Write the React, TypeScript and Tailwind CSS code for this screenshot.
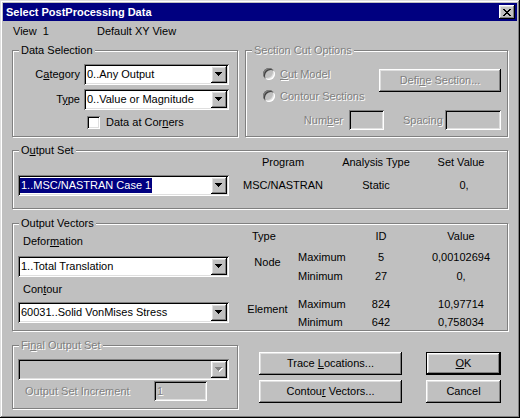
import React from "react";

const raised =
  "shadow-[inset_-1px_-1px_#000,inset_1px_1px_#fff,inset_-2px_-2px_#808080,inset_2px_2px_#dfdfdf]";
const sunken =
  "shadow-[inset_1px_1px_#808080,inset_-1px_-1px_#fff,inset_2px_2px_#000,inset_-2px_-2px_#dfdfdf]";
const dim = "text-[#808080] [text-shadow:1px_1px_0_#fff]";

const Arrow = ({ disabled }: { disabled?: boolean }) => (
  <svg width="8" height="5" viewBox="0 0 8 5" shapeRendering="crispEdges">
    {disabled && (
      <path d="M1 1h7v1H1zM2 2h5v1H2zM3 3h3v1H3zM4 4h1v1H4z" fill="#fff" />
    )}
    <path
      d="M0 0h7v1H0zM1 1h5v1H1zM2 2h3v1H2zM3 3h1v1H3z"
      fill={disabled ? "#808080" : "#000"}
    />
  </svg>
);

function Combo({
  className,
  children,
  disabled,
}: {
  className?: string;
  children?: React.ReactNode;
  disabled?: boolean;
}) {
  return (
    <div
      className={`flex h-[21px] p-[2px] ${sunken} ${
        disabled ? "bg-[#c0c0c0]" : "bg-white"
      } ${className ?? ""}`}
    >
      <div className="flex flex-1 items-center overflow-hidden whitespace-nowrap">
        {children}
      </div>
      <div
        className={`flex w-[16px] items-center justify-center bg-[#c0c0c0] ${raised}`}
      >
        <Arrow disabled={disabled} />
      </div>
    </div>
  );
}

function Button({
  className,
  children,
  disabled,
  isDefault,
}: {
  className?: string;
  children: React.ReactNode;
  disabled?: boolean;
  isDefault?: boolean;
}) {
  return (
    <div
      className={`flex h-[23px] items-center justify-center whitespace-nowrap bg-[#c0c0c0] ${raised} ${
        isDefault ? "border border-black" : ""
      } ${disabled ? dim : ""} ${className ?? ""}`}
    >
      <span>{children}</span>
    </div>
  );
}

const Radio = () => (
  <div className="h-[12px] w-[12px] shrink-0 rounded-full bg-[#c0c0c0] shadow-[inset_1px_1px_#808080,inset_-1px_-1px_#fff,inset_2px_2px_#404040,inset_-2px_-2px_#dfdfdf]" />
);

function Group({
  label,
  disabled,
  className,
  children,
}: {
  label: React.ReactNode;
  disabled?: boolean;
  className?: string;
  children?: React.ReactNode;
}) {
  return (
    <div
      className={`relative shrink-0 border border-[#808080] shadow-[1px_1px_0_#fff,inset_1px_1px_0_#fff] ${
        className ?? ""
      }`}
    >
      <span
        className={`absolute left-[6px] top-[-7px] whitespace-nowrap bg-[#c0c0c0] px-[2px] leading-[13px] ${
          disabled ? dim : ""
        }`}
      >
        {label}
      </span>
      {children}
    </div>
  );
}

function DataRow({
  label,
  id,
  value,
  className,
}: {
  label: string;
  id: string;
  value: string;
  className?: string;
}) {
  return (
    <div className={`flex h-[13px] ${className ?? ""}`}>
      <div className="w-[43px] whitespace-nowrap">{label}</div>
      <div className="w-[80px] text-center">{id}</div>
      <div className="w-[80px] text-center">{value}</div>
    </div>
  );
}

export default function App() {
  return (
    <div className="h-[418px] w-[520px] overflow-hidden bg-[#c0c0c0] p-[3px] font-['Liberation_Sans',Arial,sans-serif] text-[11px] leading-[13px] text-black shadow-[inset_-1px_-1px_#000,inset_1px_1px_#dfdfdf,inset_-2px_-2px_#808080,inset_2px_2px_#fff]">
      {/* title bar */}
      <div className="flex h-[18px] items-center justify-between bg-[#000080] pl-[3px] pr-[2px]">
        <span className="font-bold text-white">Select PostProcessing Data</span>
        <div
          className={`flex h-[14px] w-[16px] items-center justify-center bg-[#c0c0c0] ${raised}`}
        >
          <svg width="8" height="7" viewBox="0 0 8 7" shapeRendering="crispEdges">
            <path
              d="M0 0h2v1H0zM6 0h2v1H6zM1 1h2v1H1zM5 1h2v1H5zM2 2h4v1H2zM3 3h2v1H3zM2 4h4v1H2zM1 5h2v1H1zM5 5h2v1H5zM0 6h2v1H0zM6 6h2v1H6z"
              fill="#000"
            />
          </svg>
        </div>
      </div>

      <div className="pl-[9px]">
        <div className="mt-[4px] flex h-[13px] items-center">
          <span className="ml-[1px] w-[84px]">
            View<span className="ml-[6px]">1</span>
          </span>
          <span>Default XY View</span>
        </div>

        {/* top row */}
        <div className="mt-[12px] flex gap-[7px]">
          <Group label="Data Selection" className="h-[87px] w-[226px]">
            <div className="mt-[13px] flex items-center">
              <span className="w-[67px] text-right">
                C<u>a</u>tegory
              </span>
              <Combo className="ml-[4px] w-[145px]">
                <span className="pl-[1px]">0..Any Output</span>
              </Combo>
            </div>
            <div className="mt-[4px] flex items-center">
              <span className="w-[67px] text-right">
                T<u>y</u>pe
              </span>
              <Combo className="ml-[4px] w-[145px]">
                <span className="pl-[1px]">0..Value or Magnitude</span>
              </Combo>
            </div>
            <div className="mt-[6px] flex items-center">
              <div className={`ml-[74px] h-[13px] w-[13px] bg-white ${sunken}`} />
              <span className="ml-[6px]">
                Data at Cor<u>n</u>ers
              </span>
            </div>
          </Group>

          <Group label="Section Cut Options" disabled className="h-[87px] w-[263px]">
            <div className="flex">
              <div className="ml-[17px] mt-[17px] w-[116px]">
                <div className="flex h-[12px] items-center gap-[5px]">
                  <Radio />
                  <span className={dim}>
                    <u>C</u>ut Model
                  </span>
                </div>
                <div className="mt-[10px] flex h-[12px] items-center gap-[5px]">
                  <Radio />
                  <span className={`whitespace-nowrap ${dim}`}>Contour Sections</span>
                </div>
              </div>
              <Button disabled className="mt-[18px] w-[122px]">
                Defi<u>n</u>e Section...
              </Button>
            </div>
            <div className="mt-[8px] flex items-center">
              <span className={`w-[97px] text-right ${dim}`}>
                Num<u>b</u>er
              </span>
              <div className={`ml-[6px] h-[20px] w-[35px] bg-[#c0c0c0] ${sunken}`} />
              <span className={`ml-[19px] w-[37px] text-right ${dim}`}>Spacing</span>
              <div className={`ml-[5px] h-[20px] w-[56px] bg-[#c0c0c0] ${sunken}`} />
            </div>
          </Group>
        </div>

        {/* output set */}
        <Group
          label={
            <>
              O<u>u</u>tput Set
            </>
          }
          className="mt-[13px] h-[59px] w-[496px]"
        >
          <div className="mt-[5px] flex h-[13px]">
            <div className="w-[216px]" />
            <div className="w-[108px] text-center">Program</div>
            <div className="w-[78px] text-center">Analysis Type</div>
            <div className="w-[92px] text-center">Set Value</div>
          </div>
          <div className="mt-[6px] flex items-center">
            <Combo className="ml-[5px] w-[211px]">
              <span className="flex h-[15px] items-center bg-[#000080] px-[1px] text-white">
                1..MSC/NASTRAN Case 1
              </span>
            </Combo>
            <div className="w-[108px] text-center">MSC/NASTRAN</div>
            <div className="w-[78px] text-center">Static</div>
            <div className="w-[92px] pl-[6px] text-center">0,</div>
          </div>
        </Group>

        {/* output vectors */}
        <Group label="Output Vectors" className="mt-[14px] h-[108px] w-[496px]">
          <div className="flex">
            <div className="w-[216px]">
              <div className="ml-[10px] mt-[11px] h-[13px]">
                Defor<u>m</u>ation
              </div>
              <Combo className="ml-[5px] mt-[8px] w-[211px]">
                <span className="pl-[1px]">1..Total Translation</span>
              </Combo>
              <div className="ml-[10px] mt-[6px] h-[13px]">
                Con<u>t</u>our
              </div>
              <Combo className="ml-[5px] mt-[6px] w-[211px]">
                <span className="pl-[1px]">60031..Solid VonMises Stress</span>
              </Combo>
            </div>
            <div className="ml-[8px] mt-[6px]">
              <div className="flex h-[13px]">
                <div className="w-[61px] pl-[15px]">Type</div>
                <div className="w-[43px]" />
                <div className="w-[80px] text-center">ID</div>
                <div className="w-[80px] text-center">Value</div>
              </div>
              <div className="mt-[8px] flex">
                <div className="w-[61px] pt-[5px] text-center">Node</div>
                <div>
                  <DataRow label="Maximum" id="5" value="0,00102694" />
                  <DataRow className="mt-[6px]" label="Minimum" id="27" value="0," />
                </div>
              </div>
              <div className="mt-[15px] flex">
                <div className="w-[61px] pt-[5px] text-center">Element</div>
                <div>
                  <DataRow label="Maximum" id="824" value="10,97714" />
                  <DataRow className="mt-[5px]" label="Minimum" id="642" value="0,758034" />
                </div>
              </div>
            </div>
          </div>
        </Group>

        {/* bottom row */}
        <div className="mt-[14px] flex">
          <Group
            label={
              <>
                Fi<u>n</u>al Output Set
              </>
            }
            disabled
            className="h-[64px] w-[226px]"
          >
            <Combo disabled className="ml-[5px] mt-[13px] w-[211px]" />
            <div className="mt-[1px] flex h-[20px] items-center">
              <span className={`ml-[12px] w-[129px] whitespace-nowrap ${dim}`}>
                Output Set Increment
              </span>
              <div
                className={`flex h-[20px] w-[53px] items-center bg-[#c0c0c0] pl-[3px] ${sunken} ${dim}`}
              >
                1
              </div>
            </div>
          </Group>
          <div className="ml-[21px] mt-[7px] flex flex-col gap-[5px]">
            <Button className="w-[143px]">
              Trace <u>L</u>ocations...
            </Button>
            <Button className="w-[143px]">
              Contou<u>r</u> Vectors...
            </Button>
          </div>
          <div className="ml-[24px] mt-[7px] flex flex-col gap-[5px]">
            <Button isDefault className="w-[75px]">
              <u>O</u>K
            </Button>
            <Button className="w-[75px]">Cancel</Button>
          </div>
        </div>
      </div>
    </div>
  );
}
